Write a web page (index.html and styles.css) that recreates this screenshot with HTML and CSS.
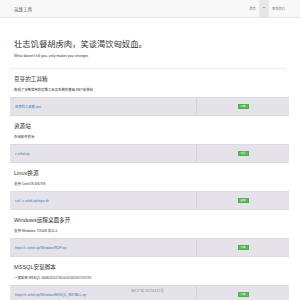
FILE: index.html
```html
<!DOCTYPE html>
<html lang="zh-CN">
<head>
  <meta charset="UTF-8" />
  <meta name="viewport" content="width=device-width, initial-scale=1" />
  <title>运维工具</title>
  <link rel="stylesheet" href="styles.css">
</head>
<body>
  <!-- 顶部导航 -->
  <nav class="navbar">
    <a class="brand" href="#">运维工具</a>
    <ul class="nav">
      <li><a href="#">首页</a></li>
      <li class="active"><a href="#">**</a></li>
      <li><a href="#">联系我们</a></li>
    </ul>
  </nav>

  <div class="container">
    <div class="jumbo">
      <h1>壮志饥餐胡虏肉，笑谈渴饮匈奴血。</h1>
      <p>What doesn't kill you, only makes you stronger.</p>
    </div>
    <hr>

    <div class="tool">
      <h2>豆芽的工具箱</h2>
      <p class="desc">集成了多款常用的运维工具及系统的基础.NET安装包</p>
      <div class="row">
        <div class="cell"><a href="#">豆芽的工具箱.exe</a></div>
        <div class="cell center"><span class="badge">下载</span></div>
      </div>
    </div>

    <div class="tool">
      <h2>资源站</h2>
      <p class="desc">在线软件资源</p>
      <div class="row">
        <div class="cell"><a href="#">c.sshd.vip</a></div>
        <div class="cell center"><span class="badge">访问</span></div>
      </div>
    </div>

    <div class="tool">
      <h2>Linux换源</h2>
      <p class="desc">支持 CentOS 6/6/7/8</p>
      <div class="row">
        <div class="cell"><a href="#">curl -s sshd.vip/repo.sh</a></div>
        <div class="cell center"><span class="badge">复制</span></div>
      </div>
    </div>

    <div class="tool">
      <h2>Windows远程桌面多开</h2>
      <p class="desc">支持 Windows 7/2008 及以上</p>
      <div class="row">
        <div class="cell"><a href="#">https://c.sshd.vip/Windows/RDP.zip</a></div>
        <div class="cell center"><span class="badge">下载</span></div>
      </div>
    </div>

    <div class="tool">
      <h2>MSSQL安装脚本</h2>
      <p class="desc">一键安装 MSSQL 2008/2012/2014/2016/2017/2019</p>
      <div class="row">
        <div class="cell"><a href="#">https://c.sshd.vip/Windows/MSSQL_INSTALL.zip</a></div>
        <div class="cell center"><span class="badge">下载</span></div>
      </div>
    </div>
  </div>

  <footer class="footer">闽ICP备18026632号</footer>
</body>
</html>
```

FILE: styles.css
```css
body {
  margin: 0;
  background-color: #fff;
  font-family: "Liberation Sans", "Noto Sans CJK SC", sans-serif;
  color: #333;
}

a {
  text-decoration: none;
}

/* 导航栏 */
.navbar {
  height: 17px;
  display: flex;
  align-items: stretch;
  justify-content: space-between;
  padding: 0 12px 0 14px;
  background-color: #f8f8f8;
  border-bottom: 1px solid #e7e7e7;
}
.brand {
  align-self: center;
  font-size: 4.5px;
  color: #555;
}
.nav {
  display: flex;
  margin: 0;
  padding: 0;
  list-style: none;
}
.nav li {
  display: flex;
  align-items: center;
  padding: 0 3px;
}
.nav li a {
  font-size: 3.2px;
  color: #777;
}
.nav li.active {
  background-color: #e7e7e7;
  padding: 0 4px;
}
.nav li.active a {
  color: #555;
}

.container {
  margin: 0 11px 0 10px;
}

.jumbo {
  padding: 0 4px;
}
.jumbo h1 {
  margin: 21px 0 0;
  font-size: 8.3px;
  line-height: 11px;
  font-weight: normal;
  color: #333;
}
.jumbo p {
  margin: 4px 0 0;
  font-size: 3.6px;
  line-height: 5px;
  color: #333;
}

hr {
  margin: 9px 3px 6px 0;
  border: 0;
  border-top: 1px solid #eee;
}

/* 工具列表 */
.tool {
  margin-bottom: 6px;
}
.tool h2 {
  margin: 0;
  padding: 0 4px;
  font-size: 5.6px;
  line-height: 8px;
  font-weight: normal;
  color: #333;
}
.tool .desc {
  margin: 5px 0 0;
  padding: 0 4px;
  font-size: 3.4px;
  line-height: 4px;
  color: #333;
}
.row {
  margin-top: 5px;
  display: grid;
  grid-template-columns: 186px 1fr;
  height: 17px;
  background-color: #e5e2ea;
  border-top: 1px solid #dcd9e1;
  border-bottom: 1px solid #dcd9e1;
}
.cell {
  display: flex;
  align-items: center;
  padding: 0 5px;
  font-size: 3.3px;
}
.cell + .cell {
  border-left: 1px solid #d6d3db;
}
.cell a {
  color: #337ab7;
}
.center {
  justify-content: center;
}
.badge {
  display: inline-block;
  width: 9px;
  height: 3px;
  line-height: 3px;
  text-align: center;
  font-size: 2.4px;
  color: #fff;
  background-color: #5cb85c;
  border: 1px solid #4cae4c;
}

.footer {
  position: fixed;
  left: 131px;
  bottom: 7px;
  font-size: 3.6px;
  color: #999;
}
```
